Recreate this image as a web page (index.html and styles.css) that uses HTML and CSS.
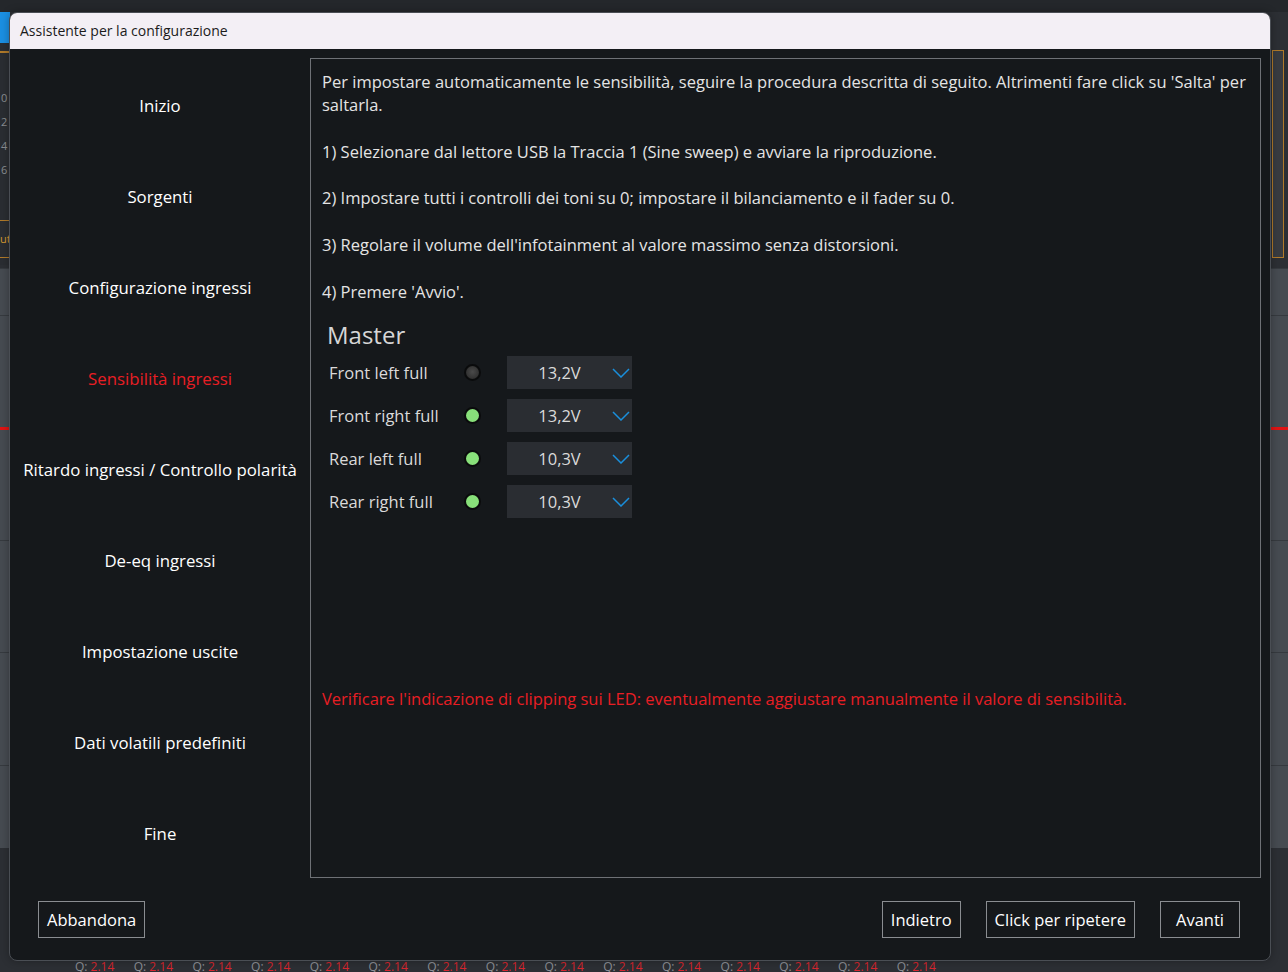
FILE: index.html
```html
<!DOCTYPE html>
<html lang="it">
<head>
<meta charset="utf-8">
<title>Assistente per la configurazione</title>
<link rel="stylesheet" href="styles.css">
</head>
<body>
<div class="desktop">
  <div class="bg-top"></div>
  <div class="bg-blue"></div>
  <div class="bg-left-panel">
    <div class="bg-orange-line"></div>
    <div class="bg-nums"><span>0</span><span>2</span><span>4</span><span>6</span></div>
    <div class="bg-orange-box"><span>ut</span></div>
  </div>
  <div class="bg-right-box"></div>
  <div class="bg-grid">
    <div class="bg-row"></div>
    <div class="bg-row"></div>
    <div class="bg-row bg-row-red"></div>
    <div class="bg-row"></div>
    <div class="bg-row"></div>
    <div class="bg-row"></div>
  </div>
  <div class="bg-q">
    <span class="q">Q: <b>2.14</b></span><span class="q">Q: <b>2.14</b></span><span class="q">Q: <b>2.14</b></span><span class="q">Q: <b>2.14</b></span><span class="q">Q: <b>2.14</b></span><span class="q">Q: <b>2.14</b></span><span class="q">Q: <b>2.14</b></span><span class="q">Q: <b>2.14</b></span><span class="q">Q: <b>2.14</b></span><span class="q">Q: <b>2.14</b></span><span class="q">Q: <b>2.14</b></span><span class="q">Q: <b>2.14</b></span><span class="q">Q: <b>2.14</b></span><span class="q">Q: <b>2.14</b></span><span class="q">Q: <b>2.14</b></span>
  </div>

  <div class="dialog">
    <div class="titlebar">Assistente per la configurazione</div>
    <div class="dlg-body">
      <nav class="steps">
        <div class="step">Inizio</div>
        <div class="step">Sorgenti</div>
        <div class="step">Configurazione ingressi</div>
        <div class="step active">Sensibilità ingressi</div>
        <div class="step">Ritardo ingressi / Controllo polarità</div>
        <div class="step">De-eq ingressi</div>
        <div class="step">Impostazione uscite</div>
        <div class="step">Dati volatili predefiniti</div>
        <div class="step">Fine</div>
      </nav>
      <section class="content">
        <p>Per impostare automaticamente le sensibilità, seguire la procedura descritta di seguito. Altrimenti fare click su 'Salta' per<br>saltarla.</p>
        <p>1) Selezionare dal lettore USB la Traccia 1 (Sine sweep) e avviare la riproduzione.</p>
        <p>2) Impostare tutti i controlli dei toni su 0; impostare il bilanciamento e il fader su 0.</p>
        <p>3) Regolare il volume dell'infotainment al valore massimo senza distorsioni.</p>
        <p>4) Premere 'Avvio'.</p>
        <h2 class="master">Master</h2>
        <div class="channels">
          <div class="ch">
            <span class="ch-label">Front left full</span>
            <span class="led off"></span>
            <div class="select"><span class="val">13,2V</span><svg class="chev" viewBox="0 0 18 10" width="18" height="10"><path d="M1 1 L9 9 L17 1" fill="none" stroke="#1a8fdc" stroke-width="1.5"/></svg></div>
          </div>
          <div class="ch">
            <span class="ch-label">Front right full</span>
            <span class="led on"></span>
            <div class="select"><span class="val">13,2V</span><svg class="chev" viewBox="0 0 18 10" width="18" height="10"><path d="M1 1 L9 9 L17 1" fill="none" stroke="#1a8fdc" stroke-width="1.5"/></svg></div>
          </div>
          <div class="ch">
            <span class="ch-label">Rear left full</span>
            <span class="led on"></span>
            <div class="select"><span class="val">10,3V</span><svg class="chev" viewBox="0 0 18 10" width="18" height="10"><path d="M1 1 L9 9 L17 1" fill="none" stroke="#1a8fdc" stroke-width="1.5"/></svg></div>
          </div>
          <div class="ch">
            <span class="ch-label">Rear right full</span>
            <span class="led on"></span>
            <div class="select"><span class="val">10,3V</span><svg class="chev" viewBox="0 0 18 10" width="18" height="10"><path d="M1 1 L9 9 L17 1" fill="none" stroke="#1a8fdc" stroke-width="1.5"/></svg></div>
          </div>
        </div>
        <p class="warn">Verificare l'indicazione di clipping sui LED: eventualmente aggiustare manualmente il valore di sensibilità.</p>
      </section>
    </div>
    <div class="footer">
      <button class="btn">Abbandona</button>
      <div class="spacer"></div>
      <button class="btn">Indietro</button>
      <button class="btn">Click per ripetere</button>
      <button class="btn btn-wide">Avanti</button>
    </div>
  </div>
</div>
</body>
</html>
```

FILE: styles.css
```css
* { box-sizing: border-box; }
html, body { margin: 0; padding: 0; }
body {
  width: 1288px;
  height: 972px;
  overflow: hidden;
  background: #2b2e33;
  font-family: "Open Sans", "Noto Sans", sans-serif;
}
.desktop {
  position: relative;
  width: 1288px;
  height: 972px;
  overflow: hidden;
  background: #2c2f34;
}

/* ---- backdrop application (partially hidden) ---- */
.bg-top {
  position: absolute; left: 0; top: 0; width: 1288px; height: 12px;
  background: #24272b;
}
.bg-blue {
  position: absolute; left: 0; top: 12px; width: 10px; height: 31px;
  background: #1b8fe2;
}
.bg-left-panel {
  position: absolute; left: 0; top: 43px; width: 10px; height: 222px;
  background: #2a2d32;
}
.bg-orange-line {
  position: absolute; left: 0; top: 8px; width: 10px; height: 2px; background: #b07a2a;
}
.bg-nums {
  position: absolute; left: 1px; top: 46px;
  display: flex; flex-direction: column; gap: 6px;
  font-size: 11px; color: #8a8d91; line-height: 18px;
}
.bg-orange-box {
  position: absolute; left: 0; top: 177px; width: 10px; height: 38px;
  border-top: 1px solid #b07a2a; border-bottom: 1px solid #b07a2a;
  color: #d89a30; font-size: 11px; line-height: 36px;
}
.bg-right-box {
  position: absolute; left: 1272px; top: 50px; width: 12px; height: 208px;
  border: 1px solid #b07a2a; background: #383b40;
}
.bg-grid {
  position: absolute; left: 0; top: 268px; width: 1288px; height: 580px;
  background: #464b51;
  display: flex; flex-direction: column;
}
.bg-row { border-top: 1px solid #363a3f; }
.bg-row:nth-child(1) { height: 47px; }
.bg-row:nth-child(2) { height: 112px; }
.bg-row:nth-child(3) { height: 113px; }
.bg-row:nth-child(4) { height: 112px; }
.bg-row:nth-child(5) { height: 113px; }
.bg-row:nth-child(6) { flex: 1; }
.bg-row-red { border-top: 3px solid #e01414; }
.bg-q {
  position: absolute; left: 75px; top: 961px; height: 11px;
  display: flex; gap: 0;
  font-family: "Open Sans", sans-serif; font-size: 12px; color: #8c9096;
  line-height: 11px; white-space: nowrap;
}
.q { width: 58.7px; display: inline-block; }
.q b { font-weight: normal; color: #d8262e; }

/* ---- dialog ---- */
.dialog {
  position: absolute; left: 9px; top: 12px; width: 1262px; height: 949px;
  background: #15181b;
  border: 1px solid #4a4e54;
  border-radius: 8px;
  overflow: hidden;
  display: flex; flex-direction: column;
  box-shadow: 0 0 8px rgba(0,0,0,0.3);
}
.titlebar {
  height: 36px;
  background: #f3eff5;
  color: #1b1b1b;
  font-size: 14px;
  line-height: 36px;
  padding-left: 10px;
  flex: none;
}
.dlg-body {
  display: flex;
  height: 830px;
  padding-top: 9px;
  flex: none;
}
.steps {
  width: 300px;
  flex: none;
  display: flex; flex-direction: column;
  padding-top: 2px;
}
.step {
  height: 91px;
  display: flex; align-items: center; justify-content: center;
  color: #ffffff;
  font-size: 16.8px;
  white-space: nowrap;
}
.step.active { color: #e81e24; }

.content {
  width: 951px;
  height: 820px;
  border: 1px solid #6e7176;
  padding: 11px 11px 0 11px;
  color: #e4e4e4;
  font-size: 16.5px;
  line-height: 23.3px;
}
.content p { margin: 0 0 23.3px 0; }
.master {
  margin: 0; padding-left: 5px;
  font-size: 24px; font-weight: normal; color: #d6d6d6;
  line-height: 32px; margin-top: -7px;
}
.channels {
  display: flex; flex-direction: column; gap: 10px;
  padding-left: 7px; margin-top: 5px;
}
.ch { display: flex; align-items: center; height: 33px; }
.ch-label { width: 132px; color: #dadada; }
.led {
  width: 17px; height: 17px; border-radius: 50%;
  margin-left: 3px; flex: none;
  border: 2px solid #0a0b0c;
}
.led.off { background: radial-gradient(circle at 50% 45%, #4a4a4a, #262626); }
.led.on { background: #88e07a; }
.select {
  margin-left: 26px;
  width: 125px; height: 33px;
  background: #2a2d32;
  display: flex; align-items: center;
}
.val { width: 105px; text-align: center; color: #dadada; }
.chev { display: block; }
.warn { color: #e81e24; margin-top: 169px !important; }

.footer {
  flex: 1;
  display: flex; align-items: center;
  padding: 0 30px 0 28px;
  gap: 25px;
}
.spacer { flex: 1; }
.btn {
  background: transparent;
  border: 1px solid #8a8d91;
  color: #ffffff;
  font-family: inherit;
  font-size: 16.5px;
  height: 37px;
  padding: 0 8px;
}
.btn-wide { width: 80px; }
```
